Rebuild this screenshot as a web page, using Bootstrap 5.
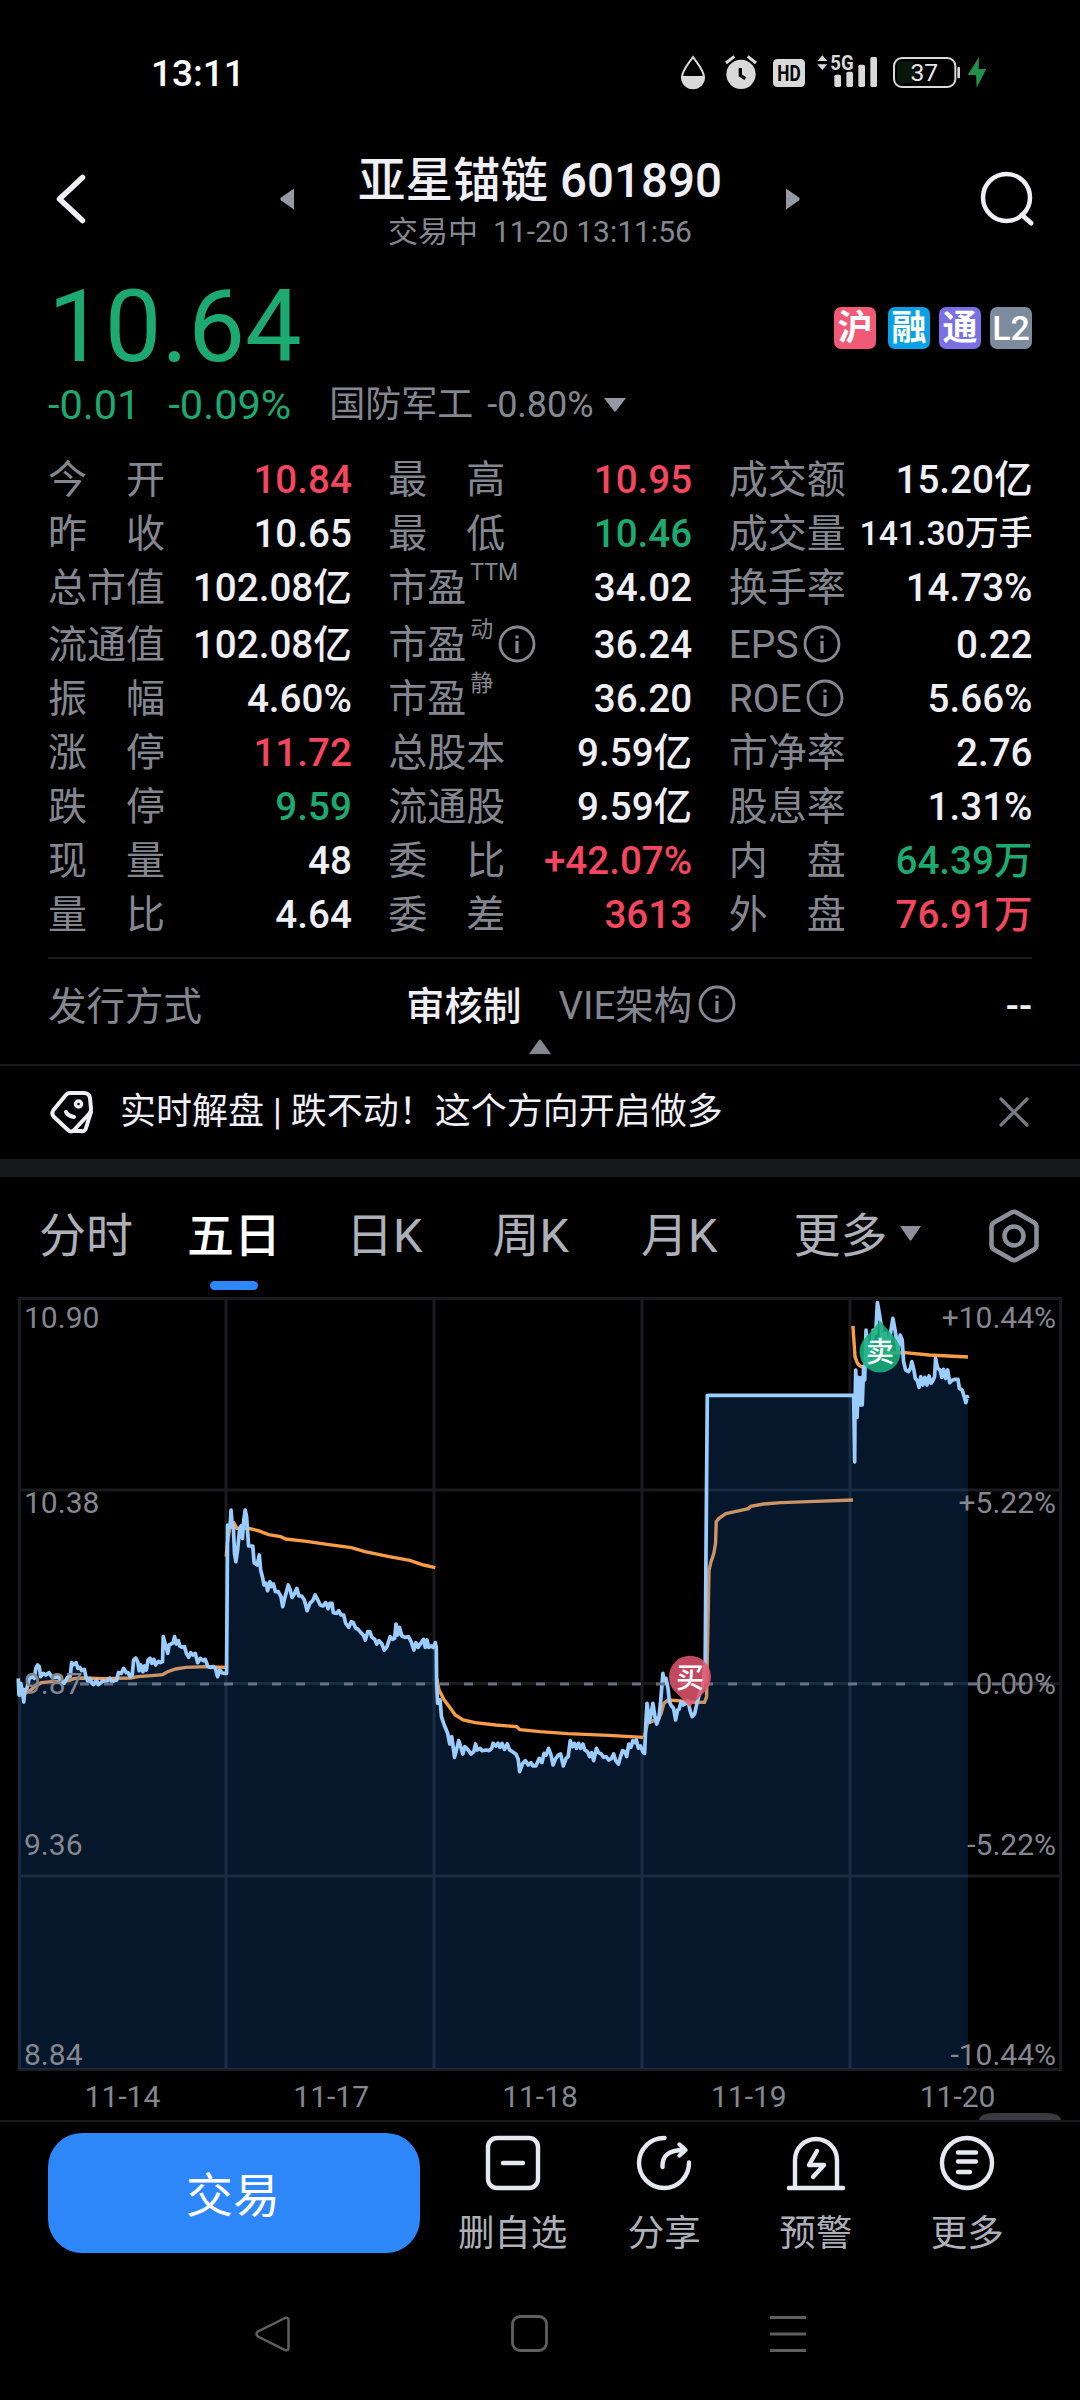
<!DOCTYPE html>
<html lang="zh-CN" data-bs-theme="dark">
<head>
<meta charset="utf-8">
<meta name="viewport" content="width=device-width, initial-scale=1">
<title>亚星锚链 601890</title>
<link href="https://cdn.jsdelivr.net/npm/bootstrap@5.3.0/dist/css/bootstrap.min.css" rel="stylesheet">
<style>
  :root { --muted:#84878f; --bright:#efeff6; --up:#f4465f; --down:#1caa70; --rule:#1a1b1f; --blue:#2e87f8; }
  body { margin:0; background:#000; color:var(--bright); font-family:Roboto,"Noto Sans CJK SC",sans-serif; width:1080px; height:2400px; overflow:hidden; white-space:nowrap; }
  svg { display:block; flex:none; overflow:visible; }
  .dim { color:var(--muted); }
  .up { color:var(--up); }
  .down { color:var(--down); }
  .statusbar { height:145px; padding:41px 60px 0 151px; }
  .statusbar svg { margin-top:-1px; }
  .clock { font-size:37px; font-weight:500; line-height:66px; color:#fff; }
  .topbar { height:108px; padding:0 46px 0 56px; }
  .switcher { width:520px; margin-left:194px; }
  .stock-head { padding-top:9px; }
  .stock-name { font-size:47.5px; font-weight:500; line-height:56px; }
  .stock-time { font-size:30px; line-height:46px; }
  .quote { padding:19px 48px 0; }
  .price { font-size:101px; line-height:110px; }
  .chips { padding-top:2px; }
  .chip { width:42px; height:42px; border-radius:7px; font-size:35px; line-height:43px; font-weight:700; color:#fff; text-align:center; }
  .chip.latin { font-size:34px; font-weight:500; }
  .change { font-size:41.5px; line-height:46px; }
  .sector { font-size:36px; }
  .facts { padding:25px 48px 0; gap:37px; }
  .fact { height:54px; font-size:39px; line-height:54px; }
  .fact.tall { height:57px; padding-top:3px; }
  .fact .val { font-weight:500; font-size:38.6px; margin-right:-.5px; }
  .fact .val.tight { font-size:33.8px; }
  .fact svg { margin-top:-2px; }
  .sup { font-size:23px; line-height:24px; align-self:flex-start; margin:0 0 0 4px; }
  .issue { margin:15px 48px 0; border-top:2px solid var(--rule); height:107px; gap:37px; font-size:38.5px; line-height:95px; }
  .fold { left:529px; top:1039px; }
  .news { height:95px; border-top:2px solid var(--rule); padding:0 51px 1px 50px; font-size:36px; }
  .band { height:18px; background:#17181c; }
  .periods { height:113px; padding:4px 41px 0 39px; font-size:47px; line-height:109px; color:#adb0b9; }
  .period-on { color:#fff; font-weight:500; }
  .period-on::after { content:""; position:absolute; left:50%; margin-left:-24px; bottom:0; width:48px; height:9px; border-radius:4.5px; background:var(--blue); }
  .chart text { font-size:30px; fill:#84878f; }
  .chart .pin-text { font-size:28px; font-weight:500; fill:#fff; text-anchor:middle; }
  .dates { padding:0 18px; height:48px; font-size:30px; line-height:50px; }
  .peek { position:absolute; left:979px; top:2113px; width:82px; height:7px; border-radius:14px 14px 0 0/7px 7px 0 0; background:#3a3a3f; }
  .actions { height:148px; border-top:2px solid var(--rule); padding:11px 37px 0 48px; }
  .trade { width:372px; height:120px; border-radius:34px; background:var(--blue); font-size:47px; line-height:125px; margin-right:17px; padding:0 2px 0 0; border:0; color:#fff; }
  .action { width:151.6px; font-size:36.5px; line-height:48px; color:#adb0b9; padding-top:3px; }
  .action span { margin-top:20px; }
  .sysnav { height:132px; padding:0 0 0 254px; }
</style>
<script src="https://cdn.jsdelivr.net/npm/bootstrap@5.3.0/dist/js/bootstrap.bundle.min.js"></script>
</head>
<body>
<svg width="0" height="0" class="position-absolute">
  <symbol id="info" viewBox="0 0 38 38"><circle cx="19" cy="19" r="17" fill="none" stroke="#84878f" stroke-width="2.8"/><path d="M19 16v12M19 10.5v3" stroke="#84878f" stroke-width="3.2" fill="none"/></symbol>
</svg>

<div class="statusbar d-flex align-items-start">
  <div class="clock">13:11</div>
  <svg class="ms-auto" width="360" height="70" viewBox="0 0 1080 210">
    <g fill="#d9d9d9">
      <path d="M99 51C85 72 66 91 66 112a33 33 0 0 0 66 0C132 91 113 72 99 51Z" fill="none" stroke="#d9d9d9" stroke-width="6"/>
      <path d="M65 108h68c0 24-14 38-34 38s-34-14-34-38Z"/>
      <circle cx="243" cy="103" r="44"/>
      <path d="M198 69l25-20M288 69l-25-20" stroke="#d9d9d9" stroke-width="9"/>
      <path d="M241 84v22l15 10" stroke="#000" stroke-width="10" fill="none"/>
      <rect x="339" y="57" width="96" height="84" rx="13"/>
      <path d="M487 46l15 17h-30ZM487 90l-15-17h30Z"/>
      <rect x="523" y="104" width="20" height="37" rx="5"/><rect x="559" y="95" width="20" height="46" rx="5"/><rect x="595" y="74" width="20" height="67" rx="5"/><rect x="631" y="51" width="20" height="90" rx="5"/>
      <rect x="892" y="81" width="8" height="34" rx="3"/>
    </g>
    <text x="387" y="123" font-size="66" font-weight="700" text-anchor="middle" textLength="70" lengthAdjust="spacingAndGlyphs">HD</text>
    <text x="511" y="91" font-size="62" font-weight="700" fill="#d9d9d9" textLength="70" lengthAdjust="spacingAndGlyphs">5G</text>
    <rect x="712" y="64" width="50" height="66" rx="12" fill="#07180b"/>
    <rect x="702" y="54" width="184" height="87" rx="24" fill="none" stroke="#d9d9d9" stroke-width="6"/>
    <text x="793" y="123" font-size="74" fill="#e8e8e8" text-anchor="middle">37</text>
    <path d="M957 51l-34 54h25l2 38 29-56h-23Z" fill="#23914a"/>
  </svg>
</div>

<header class="topbar d-flex align-items-center">
  <svg width="30" height="50" viewBox="0 0 30 50"><path d="M26.500 3.500 3.500 25 26.500 46.500" fill="none" stroke="#efeff6" stroke-width="5.500" stroke-linecap="round" stroke-linejoin="round"/></svg>
  <div class="switcher d-flex align-items-center justify-content-between">
    <svg width="14" height="22" viewBox="0 0 14 22"><path d="M14 .5v21L1 12.500q-1.500-1.500 0-3Z" fill="#9699a3"/></svg>
    <div class="stock-head text-center">
      <div class="stock-name">亚星锚链 601890</div>
      <div class="stock-time dim">交易中&nbsp; 11-20 13:11:56</div>
    </div>
    <svg width="14" height="22" viewBox="0 0 14 22"><path d="M0 .5v21L13 12.500q1.500-1.500 0-3Z" fill="#9699a3"/></svg>
  </div>
  <svg class="ms-auto" width="54" height="54" viewBox="0 0 54 54"><circle cx="26.500" cy="25.500" r="23.500" fill="none" stroke="#efeff6" stroke-width="4.500"/><path d="M42 43l9 8" stroke="#efeff6" stroke-width="5" stroke-linecap="round"/></svg>
</header>

<section class="quote">
  <div class="d-flex align-items-center justify-content-between">
    <div class="price down">10.64</div>
    <div class="chips d-flex">
      <div class="chip" style="background:#f05a76">沪</div>
      <div class="chip" style="background:#0aa0e6;margin-left:12px">融</div>
      <div class="chip" style="background:#7a6fe3;margin-left:9px">通</div>
      <div class="chip latin" style="background:#7d8b9f;margin-left:9px">L2</div>
    </div>
  </div>
  <div class="change d-flex align-items-center">
    <span class="down">-0.01</span><span class="down" style="margin-left:28px">-0.09%</span>
    <span class="sector dim" style="margin-left:38px">国防军工</span><span class="sector dim" style="margin-left:14px">-0.80%</span>
    <svg style="margin-left:10px" width="22" height="14" viewBox="0 0 22 14"><path d="M0 0h22L12 13q-1 1-2 0Z" fill="#9699a3"/></svg>
  </div>
</section>

<section class="facts d-flex" id="facts"></section>

<section class="issue d-flex">
  <div class="d-flex justify-content-between flex-fill w-50"><span class="dim">发行方式</span><span style="font-weight:500">审核制</span></div>
  <div class="d-flex align-items-center flex-fill w-50" style="height:92px"><span class="dim">VIE架构</span><svg style="margin:-2px 0 0 6px" width="38" height="38"><use href="#info"/></svg><span class="ms-auto" style="font-weight:500">--</span></div>
</section>
<svg class="fold position-absolute" width="22" height="15" viewBox="0 0 22 15"><path d="M0 15 10 1q1-1 2 0l10 14Z" fill="#84878f"/></svg>

<section class="news d-flex align-items-center">
  <svg width="44" height="46" viewBox="0 0 44 46" fill="none" stroke="#efeff6" stroke-width="4" stroke-linecap="round" stroke-linejoin="round">
    <path d="M20 4 34 4Q39 4 40 9L41 20Q41 23 39 25L24 41Q21 44 18 41L4 28Q1 25 3.500 21L15 7Q17 4 20 4Z"/>
    <path d="M41 23 36 39Q35 43 31 42L24 42"/><circle cx="28.500" cy="15" r="3" stroke-width="3.500"/><path d="M16 23Q18 27 24 28"/>
  </svg>
  <span style="margin-left:26px">实时解盘 | 跌不动！这个方向开启做多</span>
  <svg class="ms-auto" width="30" height="30" viewBox="0 0 30 30"><path d="M2 2 28 28M28 2 2 28" stroke="#777a84" stroke-width="3.200" stroke-linecap="round"/></svg>
</section>
<div class="band"></div>

<nav class="periods d-flex align-items-center">
  <span>分时</span>
  <span class="period-on position-relative" style="margin-left:54px">五日</span>
  <span style="margin-left:65px">日K</span>
  <span style="margin-left:70px">周K</span>
  <span style="margin-left:72px">月K</span>
  <span style="margin-left:76px">更多</span>
  <svg style="margin:-5px 0 0 12px" width="21" height="15" viewBox="0 0 21 15"><path d="M0 0h21l-9.500 14q-1 1-2 0Z" fill="#8d909a"/></svg>
  <svg class="ms-auto" width="50" height="54" viewBox="0 0 50 54" fill="none" stroke="#8d909a" stroke-width="4.500"><path d="M22.500 3.500Q25 2 27.500 3.500L45 13.500Q47.500 15 47.500 18V36Q47.500 39 45 40.500L27.500 50.500Q25 52 22.500 50.500L5 40.500Q2.500 39 2.500 36V18Q2.500 15 5 13.500Z"/><circle cx="25" cy="27" r="9.500"/></svg>
</nav>

<svg class="chart" width="1080" height="782" viewBox="0 1290 1080 782">
  <g stroke="#1a1b1f" stroke-width="3" fill="none">
    <rect x="19.500" y="1298.500" width="1041" height="771"/>
    <path d="M226 1298V2070M434 1298V2070M642 1298V2070M850 1298V2070M19 1490H1061M19 1683.500H1061M19 1876H1061"/>
  </g>
  <g transform="translate(0 1290) scale(.34435 .33333)" fill="none">
    <g id="avg" stroke="#f89c48" stroke-width="3.400"></g>
    <path id="area" fill="#1e73d7" fill-opacity=".2"/>
    <path id="line" stroke="#9accfd" stroke-width="3.700" vector-effect="non-scaling-stroke" stroke-linejoin="round"/>
  </g>
  <path d="M80 1684H1052" stroke="#697083" stroke-width="3.200" stroke-dasharray="9 15"/>
  <text x="24" y="1328">10.90</text><text x="24" y="1513">10.38</text><text x="24" y="1694">9.87</text><text x="24" y="1855">9.36</text><text x="24" y="2065">8.84</text>
  <g text-anchor="end"><text x="1056" y="1328">+10.44%</text><text x="1056" y="1513">+5.22%</text><text x="1056" y="1694">0.00%</text><text x="1056" y="1855">-5.22%</text><text x="1056" y="2065">-10.44%</text></g>
  <path d="M880 1321 895 1338A20.500 20.500 0 1 1 865 1338Z" fill="#19b07b" fill-opacity=".88"/>
  <path d="M690 1707 674.500 1691A21 21 0 1 1 705.500 1691Z" fill="#e3566f" fill-opacity=".85"/>
  <text class="pin-text" x="880" y="1362">卖</text><text class="pin-text" x="690" y="1688">买</text>
</svg>
<div class="dates d-flex dim text-center"><span class="col">11-14</span><span class="col">11-17</span><span class="col">11-18</span><span class="col">11-19</span><span class="col">11-20</span></div>
<div class="peek"></div>

<footer class="actions d-flex align-items-start">
  <button class="trade">交易</button>
  <div class="action d-flex flex-column align-items-center"><svg width="54" height="54" viewBox="0 0 54 54" fill="none" stroke="#e6e9f2" stroke-width="4.400" stroke-linecap="round"><rect x="2" y="2" width="50" height="50" rx="9"/><path d="M17 27H37"/></svg><span>删自选</span></div>
  <div class="action d-flex flex-column align-items-center"><svg width="54" height="54" viewBox="0 0 54 54" fill="none" stroke="#e6e9f2" stroke-width="4.400" stroke-linecap="round" stroke-linejoin="round"><path d="M27.500 2A25 25 0 1 0 52 26.500M25.500 31C25 20 31 14 47 14M42.500 8.500 48.500 14 42.500 19.500"/></svg><span>分享</span></div>
  <div class="action d-flex flex-column align-items-center"><svg width="58" height="54" viewBox="0 0 58 54" fill="none" stroke="#e6e9f2" stroke-width="4.400" stroke-linecap="round" stroke-linejoin="round"><path d="M2 52H56M8 51V24A21 21 0 0 1 50 24V51M30 15 22 29H37L26 41"/></svg><span>预警</span></div>
  <div class="action d-flex flex-column align-items-center"><svg width="54" height="54" viewBox="0 0 54 54" fill="none" stroke="#e6e9f2" stroke-width="4.400" stroke-linecap="round"><circle cx="27" cy="27" r="25"/><path d="M18 16.500H36M18 25.500H36M18 36H30"/></svg><span>更多</span></div>
</footer>

<div class="sysnav d-flex align-items-center">
  <svg width="37" height="38" viewBox="0 0 37 38"><path d="M31 3 4 16.500Q1 19 4 21.500L31 35Q34.500 36 34.500 33V5Q34.500 2 31 3Z" fill="none" stroke="#5f5f5f" stroke-width="2.500"/></svg>
  <svg style="margin-left:220px" width="38" height="38" viewBox="0 0 38 38"><rect x="1.500" y="1.500" width="34" height="34" rx="7.500" fill="none" stroke="#5f5f5f" stroke-width="2.800"/></svg>
  <svg style="margin-left:221px" width="36" height="38" viewBox="0 0 36 38"><path d="M0 2.500H36M0 19H36M0 35.500H36" stroke="#5f5f5f" stroke-width="3"/></svg>
</div>

<script>
  // Each fact: label, value, value class, small superscript, info icon
  const facts = [
    [['今　开','10.84','up'],['昨　收','10.65'],['总市值','102.08亿'],['流通值','102.08亿'],['振　幅','4.60%'],['涨　停','11.72','up'],['跌　停','9.59','down'],['现　量','48'],['量　比','4.64']],
    [['最　高','10.95','up'],['最　低','10.46','down'],['市盈','34.02','','TTM'],['市盈','36.24','','动',1],['市盈','36.20','','静'],['总股本','9.59亿'],['流通股','9.59亿'],['委　比','+42.07%','up'],['委　差','3613','up']],
    [['成交额','15.20亿'],['成交量','141.30万手','tight'],['换手率','14.73%'],['EPS','0.22','','',1],['ROE','5.66%','','',1],['市净率','2.76'],['股息率','1.31%'],['内　盘','64.39万','down'],['外　盘','76.91万','up']]
  ];
  document.getElementById('facts').innerHTML = facts.map(col => '<div class="flex-fill w-100">' + col.map(([l, v, c = '', s = '', i], n) =>
    `<div class="fact d-flex align-items-center${n === 3 ? ' tall' : ''}"><span class="dim">${l}</span>${s ? `<span class="sup dim">${s}</span>` : ''}${i ? `<svg style="margin-left:${s ? 5 : 4}px" width="38" height="38"><use href="#info"/></svg>` : ''}<span class="val ms-auto ${c}">${v}</span></div>`).join('') + '</div>').join('');

  const parse = (s, dx = 0) => s.trim().split(/\s+/).map(p => p.split(',').map(Number)).map(([x, y]) => [x + dx, y]);
  const early = parse(`53,1165 55,1215 60,1180 65,1200 69,1236 72,1200 78,1195 85,1165 95,1160 100,1165 104,1135 109,1125 114,1130 118,1160 126,1150 133,1155 142,1148 150,1160 160,1162 170,1160 180,1175 186,1180 196,1162 204,1158 208,1118 214,1124 221,1118 226,1135 232,1132 237,1142 245,1138 250,1162 256,1175 261,1165 267,1180 272,1184 280,1170 285,1184 293,1178 299,1172 306,1176 312,1172 319,1165 325,1176 332,1172 339,1170 344,1148 352,1150 359,1135 367,1148 372,1148 378,1160 384,1155 388,1110 394,1104 400,1115 404,1142 409,1125 415,1145 420,1128 425,1140 430,1110 436,1105 441,1120 447,1108 452,1125 460,1114 466,1118 472,1115 474,1040 480,1062 487,1090 491,1065 497,1062 503,1058 507,1040 512,1062 518,1052 522,1068 530,1072 536,1070 541,1090 548,1102 554,1088 560,1095 567,1090 574,1118 582,1105 590,1112 596,1108 604,1130 612,1132 620,1130 626,1136 632,1160 638,1140 644,1148 650,1150 658,1150 661,705 668,712 671,660 674,700 678,715 681,790 685,815 690,780 696,715 700,708 704,745 708,690 712,660 716,680 722,768 734,768 738,818 747,825 753,795 757,840 762,860 767,885 773,880 777,902 784,875 788,890 794,882 800,905 808,905 816,920 821,950 828,920 837,885 843,900 848,922 855,912 862,895 868,918 876,918 884,930 892,962 900,940 908,932 915,915 922,928 930,945 938,948 946,938 953,956 958,940 964,940 968,968 978,970 984,962 990,975 998,975 1004,1000 1013,1012 1020,995 1026,998 1033,1015 1040,1018 1048,1028 1055,1035 1061,1050 1068,1025 1074,1025 1080,1042 1088,1048 1094,1062 1100,1052 1108,1060 1116,1080 1124,1070 1133,1040 1140,1048 1146,1045 1150,1002 1155,1035 1160,1012 1167,1038 1176,1042 1186,1040 1194,1055 1202,1080 1208,1058 1214,1072 1222,1060 1230,1048 1235,1072 1240,1050 1245,1072 1252,1068 1258,1072 1264,1058 1267,1072 1268,1180 1271,1240 1278,1230 1282,1280 1290,1305 1300,1330 1306,1362 1312,1340 1320,1402 1326,1378 1332,1352 1338,1370 1344,1392 1350,1370 1358,1378 1368,1392 1376,1385 1381,1362 1386,1380 1394,1375 1400,1382 1412,1380 1420,1382 1428,1375 1432,1360 1440,1368 1446,1360 1452,1372 1458,1360 1465,1378 1473,1362 1480,1380 1488,1385 1498,1392 1505,1408 1509,1445 1518,1420 1526,1412 1534,1425 1542,1418 1548,1428 1556,1428 1566,1405`);
  const late = parse(`0,1410 6,1418 12,1390 18,1395 25,1375 32,1395 38,1425 46,1405 54,1395 60,1392 68,1428 76,1405 82,1400 88,1352 94,1370 100,1360 106,1375 112,1360 118,1375 125,1362 130,1380 138,1385 144,1400 150,1388 156,1412 164,1375 170,1388 178,1392 185,1402 192,1400 200,1410 208,1405 214,1392 220,1412 228,1422 234,1400 240,1382 246,1385 252,1400 258,1362 264,1372 270,1352 276,1358 280,1350 286,1375 292,1368 300,1388 304,1390 308,1290 311,1240 318,1296 324,1265 328,1240 334,1280 339,1302 345,1285 350,1240 357,1150 362,1180 366,1165 372,1195 376,1235 382,1248 388,1255 394,1290 400,1260 404,1258 410,1235 416,1245 424,1240 430,1232 436,1262 442,1280 449,1272 456,1240 464,1210 472,1190 476,1160 480,1110 482,820 486,316 911,316 914,516 915,340 917,240 921,382 925,262 930,345 934,262 936,345 940,230 943,270 947,120 952,215 956,160 962,190 968,120 975,130 980,38 984,60 990,100 996,180 1003,130 1010,190 1018,130 1025,85 1032,125 1040,180 1046,135 1052,150 1056,215 1062,240 1070,245 1076,235 1080,215 1086,240 1090,265 1096,272 1101,292 1106,260 1112,285 1118,262 1124,285 1130,258 1136,280 1142,270 1146,260 1149,205 1155,235 1162,240 1167,262 1172,238 1178,265 1184,240 1190,278 1198,270 1206,268 1214,268 1218,295 1226,300 1232,320 1237,338 1241,320 1243,325`, 1568);
  const toPath = pts => 'M' + pts.map(p => p.join(' ')).join('L');
  const price = early.concat(late);
  document.getElementById('line').setAttribute('d', toPath(price));
  document.getElementById('area').setAttribute('d', toPath(price) + 'V2338H53Z');
  const averages = [
    parse('53,1218 70,1212 90,1200 100,1190 120,1178 150,1175 200,1172 215,1166 240,1164 300,1166 380,1164 400,1160 440,1157 472,1154 485,1146 510,1137 540,1132 600,1130 655,1132'),
    parse('657,800 660,760 664,735 668,712 680,700 688,715 722,715 750,722 780,734 815,740 830,747 890,754 950,763 1020,773 1060,785 1130,800 1190,811 1230,825 1264,833'),
    parse('1268,1165 1275,1200 1290,1230 1305,1250 1322,1275 1345,1290 1380,1298 1440,1305 1500,1310 1510,1319 1568,1325 1648,1331 1768,1336 1868,1342'),
    parse('304,1340 312,1300 345,1285 352,1270 360,1240 372,1230 400,1232 430,1236 478,1237 484,1220 488,1000 491,840 497,815 505,790 510,760 512,695 520,685 540,671 580,662 605,656 612,649 650,642 700,638 800,634 909,630', 1568),
    parse('909,108 911,140 915,200 922,220 930,228 940,232 990,190 1060,188 1130,195 1243,201', 1568)
  ];
  document.getElementById('avg').innerHTML = averages.map(a => `<path vector-effect="non-scaling-stroke" d="${toPath(a)}"/>`).join('');
</script>
</body>
</html>
